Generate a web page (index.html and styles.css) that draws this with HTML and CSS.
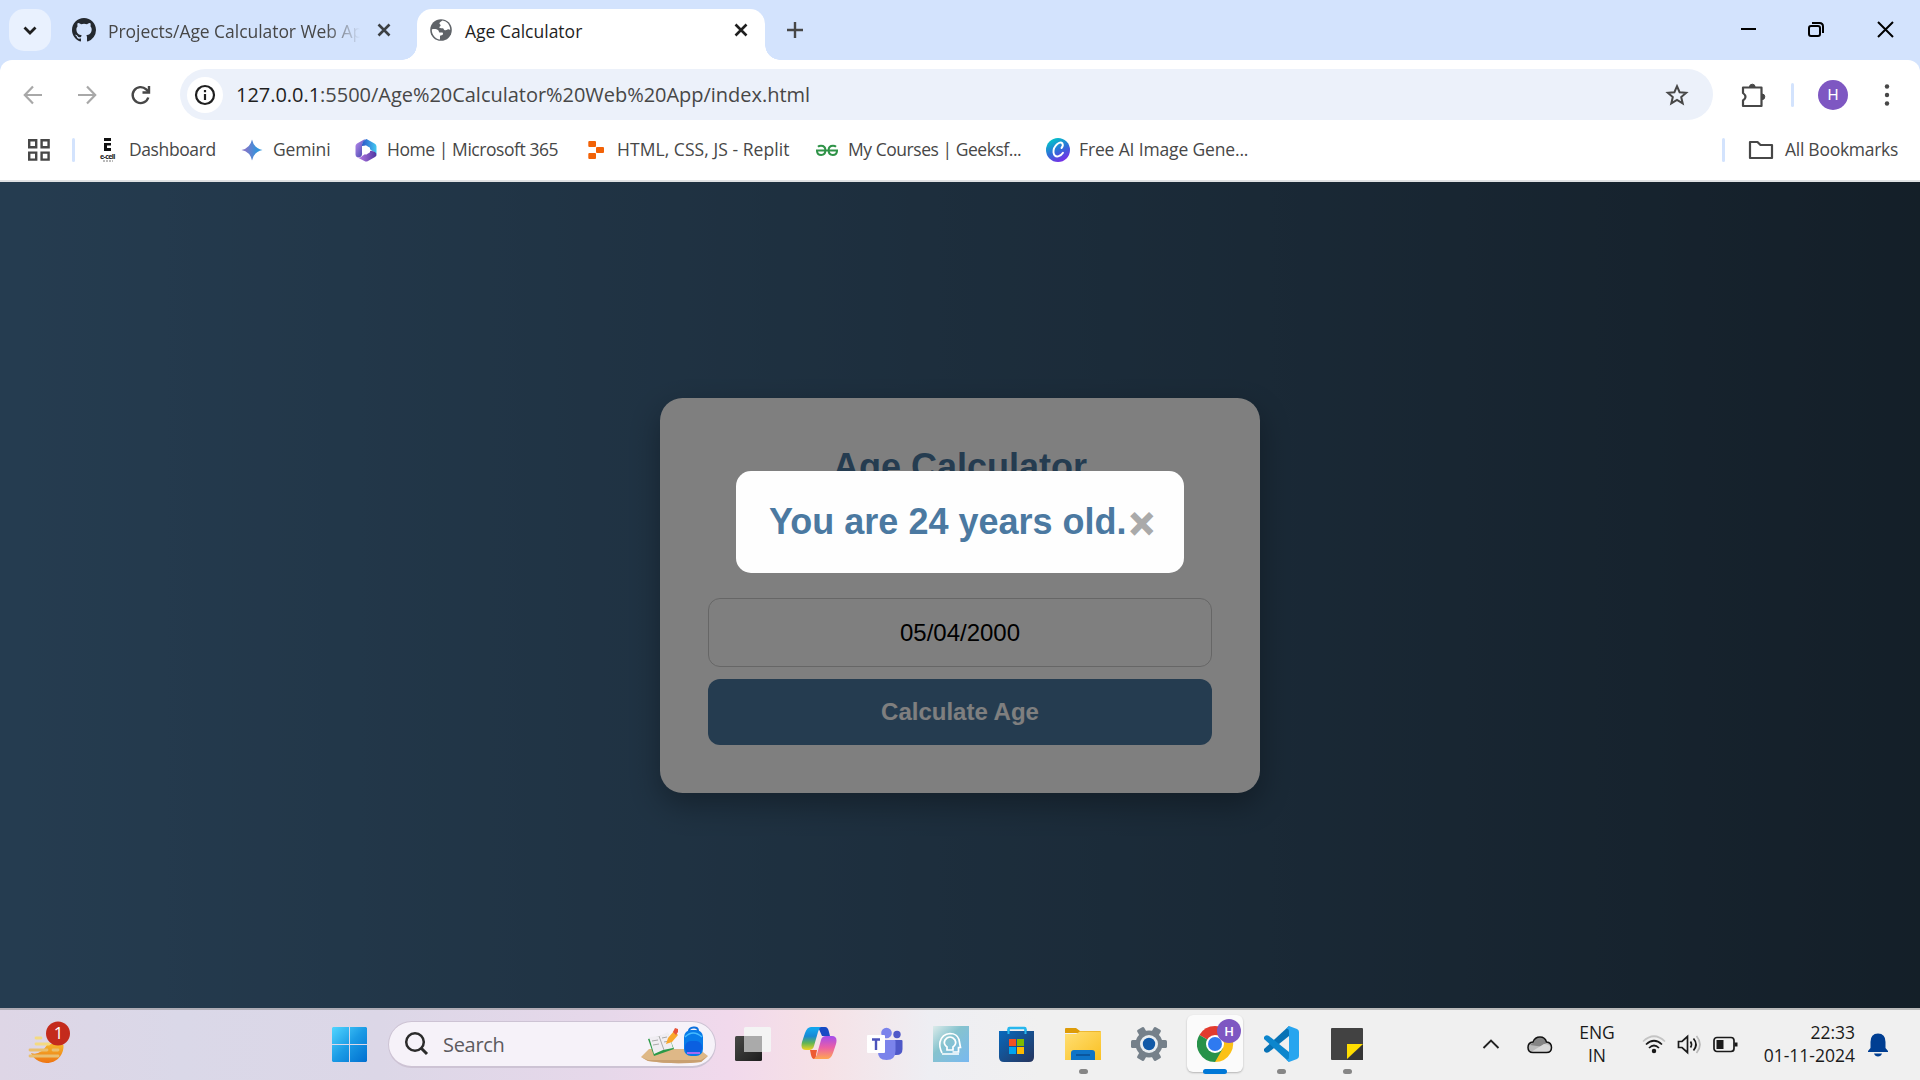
FILE: index.html
```html
<!DOCTYPE html>
<html lang="en">
<head>
<meta charset="utf-8">
<title>Age Calculator</title>
<link rel="stylesheet" href="styles.css">
</head>
<body>
<header class="tabstrip">
  <button class="tab-search"><svg width="42" height="42" fill="none" stroke="#1f1f1f" stroke-width="2.8"><path d="M15.500 18.500L21 24l5.500-5.500"/></svg></button>
  <div class="tab tab-idle">
    <svg class="tab-icon" width="24" height="24" viewBox="0 0 16 16" fill="#24292f"><path d="M8 0C3.580 0 0 3.580 0 8c0 3.540 2.290 6.530 5.470 7.590.4.070.55-.17.55-.38 0-.19-.01-.82-.01-1.490-2.010.37-2.530-.49-2.690-.94-.09-.23-.48-.94-.82-1.130-.28-.15-.68-.52-.01-.53.63-.01 1.080.58 1.230.82.72 1.210 1.870.87 2.330.66.07-.52.28-.87.51-1.070-1.780-.2-3.640-.89-3.640-3.950 0-.87.31-1.590.82-2.150-.08-.2-.36-1.020.08-2.120 0 0 .67-.21 2.200.82a7.600 7.600 0 0 1 4 0c1.530-1.040 2.200-.82 2.200-.82.44 1.100.16 1.920.08 2.120.51.56.82 1.270.82 2.150 0 3.070-1.870 3.750-3.650 3.950.29.25.54.73.54 1.480 0 1.070-.01 1.930-.01 2.200 0 .21.15.46.55.38A8.010 8.010 0 0 0 16 8c0-4.420-3.580-8-8-8z"/></svg>
    <span class="tab-title faded">Projects/Age Calculator Web Ap</span>
    <svg class="tab-close" width="24" height="24" stroke="#3c4043" stroke-width="2.600"><path d="M6.500 6.500l11 11M17.500 6.500l-11 11"/></svg>
  </div>
  <div class="tab tab-active">
    <svg class="tab-icon" width="24" height="24" viewBox="0 0 24 24"><circle cx="12" cy="12" r="10.800" fill="#5f6368"/><path d="M2.800 11.500c1.900-1 5.200-.3 6.500.8l1 2.100h3.200c.9.800.6 2-.2 2.600l-2.300.8v3.700C6.300 21 2.700 16.800 2.800 11.500zM13.500 2.600c-2 1.300-4.300 2.600-2.100 4.200.9 1.300-1.200 1.500-1 3 1.800.9 3.200-.3 4.200 1 .3 1.800 2.500 1.700 3.600 1 .9-.8 2-.5 3 .2C21.300 7 18 3.300 13.500 2.600z" fill="#fff"/></svg>
    <span class="tab-title">Age Calculator</span>
    <svg class="tab-close" width="24" height="24" stroke="#1f1f1f" stroke-width="2.600"><path d="M6.500 6.500l11 11M17.500 6.500l-11 11"/></svg>
  </div>
  <svg class="new-tab" width="24" height="24" stroke="#474747" stroke-width="2.400"><path d="M4 12h16M12 4v16"/></svg>
  <div class="window-controls">
    <svg width="69" height="58" stroke="#000" stroke-width="2"><path d="M28 29h15"/></svg>
    <svg width="69" height="58" fill="none" stroke="#000" stroke-width="2"><rect x="27" y="26" width="11" height="10" rx="2"/><path d="M30 23h7.500q3.500 0 3.500 3.500V33"/></svg>
    <svg width="69" height="58" stroke="#000" stroke-width="2"><path d="M27 22l15 15M42 22l-15 15"/></svg>
  </div>
</header>

<section class="chrome-bars">
  <nav class="toolbar">
    <svg class="nav-icon" width="24" height="24" fill="none" stroke="#a8a8a8" stroke-width="2.200"><path d="M21 12H4.500M12 3.500L3.800 12l8.200 8.500"/></svg>
    <svg class="nav-icon" width="24" height="24" fill="none" stroke="#a8a8a8" stroke-width="2.200"><path d="M3 12h16.500M12 3.500l8.200 8.500-8.200 8.500"/></svg>
    <svg class="nav-icon" width="24" height="24" fill="none" stroke="#474747" stroke-width="2.400"><path d="M19.300 14.500A8 8 0 1 1 17.200 6.300L19.500 8.700"/><path d="M20 3v6.500h-6.500"/></svg>
    <div class="omnibox">
      <span class="site-info"><svg width="22" height="22" fill="none" stroke="#1f1f1f" stroke-width="2.200"><circle cx="11" cy="11" r="9"/><path d="M11 10v6M11 6v2.200"/></svg></span>
      <span class="url"><b>127.0.0.1</b>:5500/Age%20Calculator%20Web%20App/index.html</span>
      <svg class="star" width="24" height="24" fill="none" stroke="#474747" stroke-width="2"><path d="M12 3.200l2.600 6 6.600.6-5 4.300 1.500 6.300-5.700-3.400-5.700 3.400 1.500-6.300-5-4.300 6.600-.6z"/></svg>
    </div>
    <svg class="extensions" width="26" height="26" viewBox="0 0 26 26"><path d="M3 5.500h18.500V24H3v-5.500q5-3.500 0-7.500z" fill="none" stroke="#474747" stroke-width="2.200" stroke-linejoin="round"/><path d="M9.500 5a2.800 2.800 0 0 1 5.600 0zM22 12a2.800 2.800 0 0 1 0 5.600z" fill="#474747" stroke="#474747"/></svg>
    <i class="divider"></i>
    <span class="avatar">H</span>
    <svg class="menu" width="8" height="24" fill="#474747"><circle cx="4" cy="3.500" r="2.200"/><circle cx="4" cy="12" r="2.200"/><circle cx="4" cy="20.500" r="2.200"/></svg>
  </nav>
  <nav class="bookmarks">
    <svg class="apps" width="22" height="22" fill="none" stroke="#474747" stroke-width="2.400"><path d="M1.200 1.200h7v7h-7zM13.600 1.200h7v7h-7zM1.200 13.600h7v7h-7zM13.600 13.600h7v7h-7z"/></svg>
    <i class="divider"></i>
    <a class="bookmark bm-dashboard"><svg width="24" height="24"><path d="M7 0h7v3H7zM7 5h7v2.500h-4V10h4v3H7z" fill="#111"/><text x="3" y="20.500" class="ecell" textLength="15">e-cell</text><path d="M6 23h10" stroke="#777" stroke-dasharray="2 1"/></svg><span>Dashboard</span></a>
    <a class="bookmark bm-gemini"><svg width="24" height="24"><defs><linearGradient id="gem"><stop offset=".2" stop-color="#7f77c9"/><stop offset=".75" stop-color="#3394dc"/></linearGradient></defs><path d="M12 1.500q1.800 8.700 10.500 10.500Q13.800 13.800 12 22.500 10.200 13.800 1.500 12 10.200 10.200 12 1.500z" fill="url(#gem)"/></svg><span>Gemini</span></a>
    <a class="bookmark bm-office"><svg width="24" height="24"><defs><linearGradient id="m1" x2="1" y2="1"><stop stop-color="#c08cf0"/><stop offset="1" stop-color="#3743a8"/></linearGradient><linearGradient id="m2" x2="1"><stop stop-color="#2c56c8"/><stop offset="1" stop-color="#42c9f2"/></linearGradient><linearGradient id="m3" x2="1"><stop stop-color="#bd7ce8"/><stop offset="1" stop-color="#4d36a0"/></linearGradient></defs><path d="M11 1L3 5.500Q1.500 6.500 1.500 8v8.500q0 2 1.700 2.700Q9 20 8 14V6z" fill="url(#m1)"/><path d="M8 8q0-5.500 4.500-7l8 4.500q2 1.200 2 3v8q-1.500-3-5-4L12 7.500z" fill="url(#m2)"/><path d="M3 19.200q3 1.300 5.500-1.500l8-5q6 .3 6 4.300 0 1.200-1.500 2l-7 4q-1.800 1-3.600 0z" fill="url(#m3)"/><path d="M8 9.800l4-2.200 4 2.200v4.500l-4 2.400-4-2.400z" fill="#fff"/></svg><span>Home | Microsoft 365</span></a>
    <a class="bookmark bm-replit"><svg width="24" height="24" fill="#f26207"><rect x="4.300" y="3" width="7.700" height="6" rx="1"/><rect x="12" y="9" width="8" height="6" rx="1"/><rect x="4.300" y="15" width="7.700" height="6" rx="1"/></svg><span>HTML, CSS, JS - Replit</span></a>
    <a class="bookmark bm-geeks"><svg width="24" height="24" fill="none" stroke="#2f9348" stroke-width="2"><path d="M1 12.400h22M3 8.800q1-1 3-1 4.400 0 4.400 4.500T6.200 17Q2.200 17 2 13M21 8.800q-1-1-3-1-4.400 0-4.400 4.500t4.200 4.700q4 0 4.200-4"/></svg><span>My Courses | Geeksf...</span></a>
    <a class="bookmark bm-canva"><svg width="24" height="24"><defs><linearGradient id="cv" x1=".2" x2=".7" y2="1"><stop offset=".1" stop-color="#06bcca"/><stop offset=".55" stop-color="#326bd9"/><stop offset="1" stop-color="#7d2ae8"/></linearGradient></defs><circle cx="12" cy="12" r="12" fill="url(#cv)"/><path d="M15.500 10q2.200-2.500.8-4.800-1.800-1.700-5 .8-4.200 3.600-3.800 8.500.8 4.500 4.700 3.900 3-.7 4.800-3.600" fill="none" stroke="#fff" stroke-width="1.900" stroke-linecap="round"/></svg><span>Free AI Image Gene...</span></a>
    <i class="divider divider-right"></i>
    <a class="bookmark bm-all"><svg width="26" height="24" fill="none" stroke="#474747" stroke-width="2.200" stroke-linejoin="round"><path d="M2 4h7.500l3 3H24V20H2z"/></svg><span>All Bookmarks</span></a>
  </nav>
</section>

<main class="page">
  <div class="card">
    <h1>Age Calculator</h1>
    <div class="field">05/04/2000</div>
    <button class="submit">Calculate Age</button>
  </div>
  <div class="overlay">
    <div class="modal"><p>You are 24 years old.</p><span class="close">×</span></div>
  </div>
</main>

<footer class="taskbar">
  <div class="widgets"><svg width="46" height="48" viewBox="0 0 46 48"><defs><linearGradient id="wd" x2="0" y2="1"><stop stop-color="#f5b72c"/><stop offset="1" stop-color="#ee7412"/></linearGradient></defs><path d="M36.500 26A17 17 0 0 1 4 34q9 3 16-8 8-3 16.500 0z" fill="url(#wd)"/><g stroke-linecap="round" stroke-width="2.800"><path d="M9 19h5M9 25h13" stroke="#f4da82"/><path d="M3 31h17M26 31h5M3 37h28" stroke="#e9bf70"/></g><circle cx="31" cy="14.500" r="12" fill="#c42b1c"/><text x="31.500" y="20" class="badge-num">1</text></svg></div>
  <svg class="start" width="36" height="36"><defs><linearGradient id="w" x2="1" y2="1"><stop stop-color="#51d6ff"/><stop offset=".5" stop-color="#1b9be5"/><stop offset="1" stop-color="#006fd0"/></linearGradient></defs><path d="M1 0h16v17H0V1zM18 0h16l1 1v16H18zM0 18h17v17H1l-1-1zM18 18h17v16l-1 1H18z" fill="url(#w)"/></svg>
  <div class="search">
    <svg width="26" height="26" fill="none" stroke="#2b2b2b" stroke-width="2.500"><circle cx="11" cy="11" r="8.800"/><path d="M17 17l6 6" stroke-width="3"/></svg>
    <span>Search</span>
    <svg class="search-art" width="68" height="44" viewBox="0 0 68 44"><path d="M0 35l8-8h50l9 7-7 6q-26 3-53-1z" fill="#deb887"/><path d="M0 35l7 3h53l7-4-7 6q-26 3-53-1z" fill="#c9a071"/><path d="M7 17l20-5 6 15-20 7z" fill="#2c9a48"/><path d="M8 15l10-1 9-4 5 16-10 2-9 4z" fill="#f0edf2"/><path d="M18 14l5 14M11 19l6-1M12 23l6-1M21 16l5-1M23 20l5-1" stroke="#aaa" stroke-width="1"/><path d="M25 22l2-6 6-7 4 4-6 7z" fill="#f9a72b"/><path d="M32 10l2-4 3 1v3l-2 3z" fill="#e8533b"/><rect x="43" y="8" width="19" height="26" rx="7" fill="#087be9"/><path d="M48 9q0-3 4.500-3.500T57 9" fill="none" stroke="#0c71dd" stroke-width="2"/><path d="M44 15q8-8 17 0" stroke="#46bcff" fill="none" stroke-width="1.500"/><rect x="44" y="19" width="17" height="13" rx="6" fill="#0b5fe0"/><path d="M46 31h13" stroke="#a66af1" stroke-width="2"/></svg>
  </div>
  <div class="apps-row">
    <span class="app"><svg width="36" height="36"><defs><linearGradient id="tv" x2="1" y2="1"><stop stop-color="#484846"/><stop offset="1" stop-color="#1d1d1d"/></linearGradient></defs><rect y="10" width="27" height="25" rx="1.500" fill="url(#tv)"/><rect x="9" y="1" width="27" height="25" rx="1.500" fill="#f4f4f4"/><rect x="9" y="10" width="18" height="16" fill="#aaa"/></svg></span>
    <span class="app"><svg width="36" height="36"><defs><linearGradient id="c1" x2="0" y2="1"><stop offset=".1" stop-color="#14a4ec"/><stop offset=".4" stop-color="#1788d4"/><stop offset=".7" stop-color="#63b553"/><stop offset="1" stop-color="#f1d322"/></linearGradient><linearGradient id="c2" x2="0" y2="1"><stop stop-color="#a34ced"/><stop offset=".5" stop-color="#eb5fa6"/><stop offset="1" stop-color="#ffa751"/></linearGradient></defs><path d="M17 1h7q3 0 4 5l1 4h-8z" fill="#174ac4"/><path d="M9 24h7l-1 5q0 4-2 4-2 0-3-4z" fill="#ed5b33"/><path d="M10 1h10q-2 1-3 5l-4 14q-1 4-5 4H5q-6 0-4-8L4 7q2-6 6-6z" fill="url(#c1)"/><path d="M26 33H13q2-1 3-5l4-14q1-4 5-4h6q6 0 4 8l-3 9q-2 6-6 6z" fill="url(#c2)"/></svg></span>
    <span class="app"><svg width="36" height="36"><circle cx="19.500" cy="7" r="5.300" fill="#7b83eb"/><circle cx="30" cy="8.500" r="3.700" fill="#5059c9"/><path d="M25 14h9.500q1 0 1 1v8q0 6-6 6H25z" fill="#4f58c8"/><path d="M11 14h16.500q1 0 1 1v10q0 9-9 9T11 25z" fill="#7b83eb"/><rect x="0" y="9" width="18" height="18" rx="1" fill="#fff"/><path d="M5 13.500h8M9 13.500V24" stroke="#4b53bc" stroke-width="2.400"/></svg></span>
    <span class="app"><svg width="36" height="36"><defs><linearGradient id="hd" x2="1" y2="1"><stop stop-color="#dcebea"/><stop offset=".4" stop-color="#86c3ce"/><stop offset="1" stop-color="#78b8f0"/></linearGradient></defs><rect width="36" height="36" fill="url(#hd)"/><g fill="none" stroke="#fff" stroke-width="1.700"><path d="M9 27q-3-6-2-11 2-8 10-8.500 7 0 9 6l1.500 8h-2V26h-6M9 28h17"/><path d="M14 24v-3q-4-3-2-7 2-3 5-3t5 3q2 4-2 7v3z"/></g></svg></span>
    <span class="app"><svg width="36" height="36"><defs><linearGradient id="st" x2="1" y2="1"><stop stop-color="#0869bd"/><stop offset="1" stop-color="#26345d"/></linearGradient></defs><path d="M9.500 8V3q0-1 1-1h15q1 0 1 1v5" fill="none" stroke="#27b7ee" stroke-width="2.400"/><path d="M0 5h35v26q0 5-5 5H5q-5 0-5-5z" fill="url(#st)"/><path d="M9.500 3v5M26.500 3v5" stroke="#27b7ee" stroke-width="2"/><path d="M10 13h7v7h-7z" fill="#f25022"/><path d="M18 13h7v7h-7z" fill="#7fba00"/><path d="M10 21h7v7h-7z" fill="#00a4ef"/><path d="M18 21h7v7h-7z" fill="#ffb900"/></svg></span>
    <span class="app running"><svg width="36" height="36"><defs><linearGradient id="fd" x2="1" y2="1"><stop stop-color="#ffdf74"/><stop offset="1" stop-color="#fac022"/></linearGradient></defs><path d="M0 3q0-1 1-1h10l4 3h20q1 0 1 2H0z" fill="#dd9b08"/><path d="M0 8h11l4-2.500h21V34H0z" fill="url(#fd)"/><path d="M6 34v-7q0-3 3-3h18q3 0 3 3v7z" fill="#0f74c7"/><path d="M11 29h14" stroke="#0a4e94" stroke-width="1.600"/></svg></span>
    <span class="app"><svg width="36" height="36"><circle cx="18" cy="18" r="13.500" fill="#75808a"/><g fill="#75808a"><rect x="0" y="14" width="36" height="8" rx="1.500"/><rect x="0" y="14" width="36" height="8" rx="1.500" transform="rotate(60 18 18)"/><rect x="0" y="14" width="36" height="8" rx="1.500" transform="rotate(120 18 18)"/></g><circle cx="18" cy="18" r="9" fill="#e9edf0"/><circle cx="18" cy="18" r="6.200" fill="#1159a7"/></svg></span>
    <span class="app current"><svg width="46" height="44" viewBox="0 0 46 44"><path d="M18 26L2.400 17A18 18 0 0 1 33.600 17z" fill="#e33b2e"/><path d="M18 26l15.600-9A18 18 0 0 1 18 44z" fill="#fbc116"/><path d="M18 26l7.800 4.500L18 44A18 18 0 0 1 2.400 17z" fill="#27924a"/><path d="M18 17h15.600v5H24z" fill="#fbc116"/><circle cx="18" cy="26" r="9" fill="#fff"/><circle cx="18" cy="26" r="7" fill="#2f7af0"/><circle cx="32" cy="13" r="12" fill="#7e57c2"/><text x="32" y="17.500" class="badge-h">H</text></svg></span>
    <span class="app running"><svg width="36" height="36"><path d="M1 25q2 3 5 1L26 10V0L1 23z" fill="#0872b5"/><path d="M1 11q2-3 5-1l20 16v10L1 13z" fill="#0d86cd"/><path d="M26 0l8 3q2 1 2 3v24q0 2-2 3l-8 3q-3-2-3-3 3 2 3-3V6q0-4-3-3z" fill="#27a5ef"/></svg></span>
    <span class="app running"><svg width="36" height="36"><rect x="2" y="2" width="32" height="32" rx="1" fill="#424242"/><path d="M34 18v16H18z" fill="#353535"/><path d="M18 18h16L18 33z" fill="#fd0"/></svg></span>
  </div>
  <div class="tray">
    <svg class="chev" width="20" height="20" fill="none" stroke="#222" stroke-width="1.900"><path d="M2.500 13L10 5.500l7.500 7.500"/></svg>
    <svg class="cloud" width="26" height="20"><path d="M6 17.500q-5 0-5-5t5-5.500q2-5 7-5t6.500 5q5 .5 5 5.500t-5 5z" fill="#b9b9b9"/><path d="M3 10l4-3q2-5 7-4.500t5.500 5.500l-6 3.500z" fill="#858585"/><path d="M4 17l13-8q7 .5 7.500 4.500 0 4-5 4H6z" fill="#d8d8d8"/><path d="M6 17.500q-5 0-5-5t5-5.500q2-5 7-5t6.500 5q5 .5 5 5.500t-5 5z" fill="none" stroke="#111" stroke-width="1.500"/></svg>
    <div class="lang">ENG<br>IN</div>
    <svg class="wifi" width="24" height="22" fill="none" stroke="#1a1a1a" stroke-width="1.700"><path d="M1 7.500q11-10.500 22 0" stroke="#c4c4c4"/><path d="M4 10.500q8-7.500 16 0M7 14q5-5 10 0"/><circle cx="12" cy="17" r="1.400" fill="#1a1a1a"/></svg>
    <svg class="sound" width="25" height="22" fill="none" stroke="#1a1a1a" stroke-width="1.700"><path d="M1.500 7.500H5L10.500 2.500v16L5 13.500H1.500zM13.500 7.500q2 3 0 6M16.500 4.500q5 6 0 12"/><path d="M19.500 2q7 8.500 0 17" stroke="#b9b9b9"/></svg>
    <svg class="battery" width="26" height="18" fill="none" stroke="#1a1a1a" stroke-width="1.700"><rect x="1" y="1.500" width="20" height="14" rx="3"/><path d="M3.500 4h7v9h-7z" fill="#1a1a1a" stroke="none"/><path d="M23 6.500v4" stroke-width="3"/></svg>
    <div class="clock">22:33<br>01-11-2024</div>
    <svg class="bell" width="20" height="24" fill="#003e92"><path d="M2.500 15V9q0-8.500 7.500-8.500T17.500 9v6l2.500 3v1H0v-1zM6 20.500h8q-1 3-4 3t-4-3z"/></svg>
  </div>
</footer>
</body>
</html>
```
FILE: styles.css
```css
* { box-sizing: border-box; }
html, body { margin: 0; height: 100%; overflow: hidden; }
body {
  display: flex;
  flex-direction: column;
  width: 1920px;
  height: 1080px;
  background: #d3e3fd;
  font-family: "Open Sans", "Noto Sans", sans-serif;
  font-size: 17.5px;
  color: #474747;
}
button { border: 0; padding: 0; font: inherit; }
svg { display: block; flex: none; }

/* Tabs */
.tabstrip { display: flex; align-items: flex-start; height: 60px; flex: none; padding-left: 9px; }
.tab-search { width: 42px; height: 42px; margin-top: 9px; border-radius: 15px; background: #e9f1fe; }
.tab { position: relative; display: flex; align-items: center; height: 51px; margin-top: 9px; padding-bottom: 9px; white-space: nowrap; }
.tab-idle { width: 366px; padding-left: 21px; }
.tab-active { width: 348px; padding-left: 12px; background: #fff; border-radius: 15px 15px 0 0; color: #1f1f1f; }
.tab-active::before, .tab-active::after { content: ""; position: absolute; bottom: 0; width: 15px; height: 15px; }
.tab-active::before { left: -15px; background: radial-gradient(circle at 0 0, transparent 14.5px, #fff 15px); }
.tab-active::after { right: -15px; background: radial-gradient(circle at 100% 0, transparent 14.5px, #fff 15px); }
.tab-title { flex: none; margin-left: 12px; width: 252px; line-height: 28px; padding-top: 2px; }
.tab-idle .tab-title { letter-spacing: -.05px; }
.tab-close { margin-left: 12px; }
.faded { -webkit-mask-image: linear-gradient(to right, #000 218px, transparent 252px); mask-image: linear-gradient(to right, #000 218px, transparent 252px); }
.new-tab { margin: 18px 0 0 18px; }
.window-controls { display: flex; margin-left: auto; }

/* Toolbar */
.chrome-bars { flex: none; height: 122px; background: #fff; border-radius: 12px 12px 0 0; border-bottom: 2px solid #dfe1e3; }
.toolbar { display: flex; align-items: center; height: 69px; padding: 0 29px 0 21px; }
.nav-icon { margin-right: 30px; }
.omnibox { display: flex; align-items: center; width: 1533px; height: 51px; margin-left: -3px; padding: 0 24px 0 7px; border-radius: 26px; background: #ecf1fa; }
.site-info { display: grid; place-items: center; width: 36px; height: 36px; border-radius: 50%; background: #fff; }
.url { margin-left: 13px; font-size: 20px; letter-spacing: -.03px; white-space: nowrap; }
.url b { font-weight: 400; color: #1f1f1f; }
.star { margin-left: auto; }
.extensions { margin-left: 27px; }
.divider { flex: none; width: 3px; height: 24px; border-radius: 2px; background: #d3e3fd; }
.toolbar .divider { margin-left: 25px; }
.avatar { display: grid; place-items: center; width: 30px; height: 30px; margin-left: 24px; border-radius: 50%; background: #7e57c2; color: #fff; font: 15.500px Roboto, sans-serif; }
.menu { margin-left: auto; }

/* Bookmarks */
.bookmarks { display: flex; align-items: center; height: 42px; padding-left: 28px; }
.bookmarks .divider { margin-left: 22px; }
.bookmark { display: flex; align-items: center; gap: 8px; flex: none; white-space: nowrap; }
.bookmark span { margin-top: -2px; }
.bm-dashboard { width: 143px; margin-left: 22px; letter-spacing: -.4px; }
.bm-gemini { width: 114px; gap: 9px; letter-spacing: -.15px; }
.bm-office { width: 230px; gap: 9px; letter-spacing: -.44px; }
.bm-replit, .bm-geeks { width: 231px; gap: 9px; }
.bm-replit { letter-spacing: .06px; }
.bm-geeks { letter-spacing: -.46px; }
.bm-canva { gap: 9px; letter-spacing: -.15px; }
.bookmarks .divider-right { margin-left: auto; }
.bm-all { width: 172px; margin: 0 0 0 23px; gap: 11px; letter-spacing: -.27px; }
.ecell { font: 700 7px "Open Sans", sans-serif; fill: #222; }

/* Web page */
.page { position: relative; display: grid; place-items: center; flex: 1; background: linear-gradient(to right, #4b79a1, #283e51); font-family: Arial, "Liberation Sans", sans-serif; }
.card { display: flex; flex-direction: column; width: 600px; height: 395px; margin-top: 1px; padding: 48px; border-radius: 22.500px; background: #fff; box-shadow: 0 12px 30px rgba(0, 0, 0, .3); text-align: center; }
.card h1 { margin: 0 0 111px; font-size: 36px; line-height: 41px; color: #4b79a1; }
.field { height: 69px; border: 1px solid #ccc; border-radius: 12px; font-size: 24px; line-height: 68px; color: #000; }
.submit { height: 66px; margin-top: 12px; border-radius: 12px; background: #4b79a1; color: #fff; font-size: 24px; font-weight: 700; }
.overlay { position: absolute; inset: 0; display: flex; justify-content: center; align-items: flex-start; padding-top: 289px; background: rgba(0, 0, 0, .5); }
.modal { display: flex; align-items: flex-start; width: 448px; height: 102px; padding: 30px 0 0 33px; border-radius: 15px; background: #fefefe; font-weight: 700; white-space: nowrap; }
.modal p { margin: 0; font-size: 36px; line-height: 41px; color: #4b79a1; }
.close { margin-left: 3px; font-size: 42px; line-height: 46px; color: #aaa; -webkit-text-stroke: 1.6px #aaa; }

/* Taskbar */
.taskbar { display: flex; align-items: center; flex: none; height: 72px; border-top: 2px solid rgba(120, 120, 120, .45); background: linear-gradient(to right, #ded6e6 0, #dad8e8 180px, #dcd7e7 380px, #e6d8ea 600px, #f1d9ec 730px, #f6e1e6 820px, #eeeef3 930px, #f0f0f0 1040px); background-origin: border-box; }
.widgets { width: 332px; padding: 0 0 4px 27px; }
.start { margin-top: -1px; }
.search { display: flex; align-items: center; width: 328px; height: 47px; margin: -1px 0 0 20px; padding: 0 6px 0 15px; border: 1.500px solid #cdc3d4; border-bottom-width: 2px; border-radius: 24px; background: #f6f2f9; font-size: 20px; color: #5c5a5e; }
.search span { margin-left: 13px; letter-spacing: -.3px; }
.search-art { margin-left: auto; }
.apps-row { display: flex; margin: -2px 0 0 4px; }
.app { position: relative; display: grid; place-items: center; width: 66px; height: 70px; }
.running::after, .current::after { content: ""; position: absolute; bottom: 5px; width: 9px; height: 5px; border-radius: 3px; background: #868686; }
.current svg { position: relative; margin: -8px 0 0 10px; }
.current::before { content: ""; position: absolute; left: 5px; top: 6px; width: 56px; height: 57px; border-radius: 6px; background: #fbfbfb; box-shadow: 0 1px 2px rgba(0, 0, 0, .25); }
.current::after { width: 24px; background: #0078d7; }
.badge-num { font: 17px "Open Sans", sans-serif; fill: #fff; text-anchor: middle; }
.badge-h { font: 500 13px Roboto, sans-serif; fill: #fff; text-anchor: middle; }
.tray { display: flex; align-items: center; margin-left: auto; padding-right: 32px; color: #1a1a1a; line-height: 23.500px; }
.tray div { margin-top: -2px; }
.cloud { margin-left: 26px; }
.lang { width: 60px; margin-left: 14px; text-align: center; }
.wifi { margin-left: 15px; }
.sound { margin-left: 11px; }
.battery { margin-left: 11px; }
.clock { width: 100px; margin-left: 16px; text-align: right; white-space: nowrap; }
.bell { margin-left: 13px; }
```
